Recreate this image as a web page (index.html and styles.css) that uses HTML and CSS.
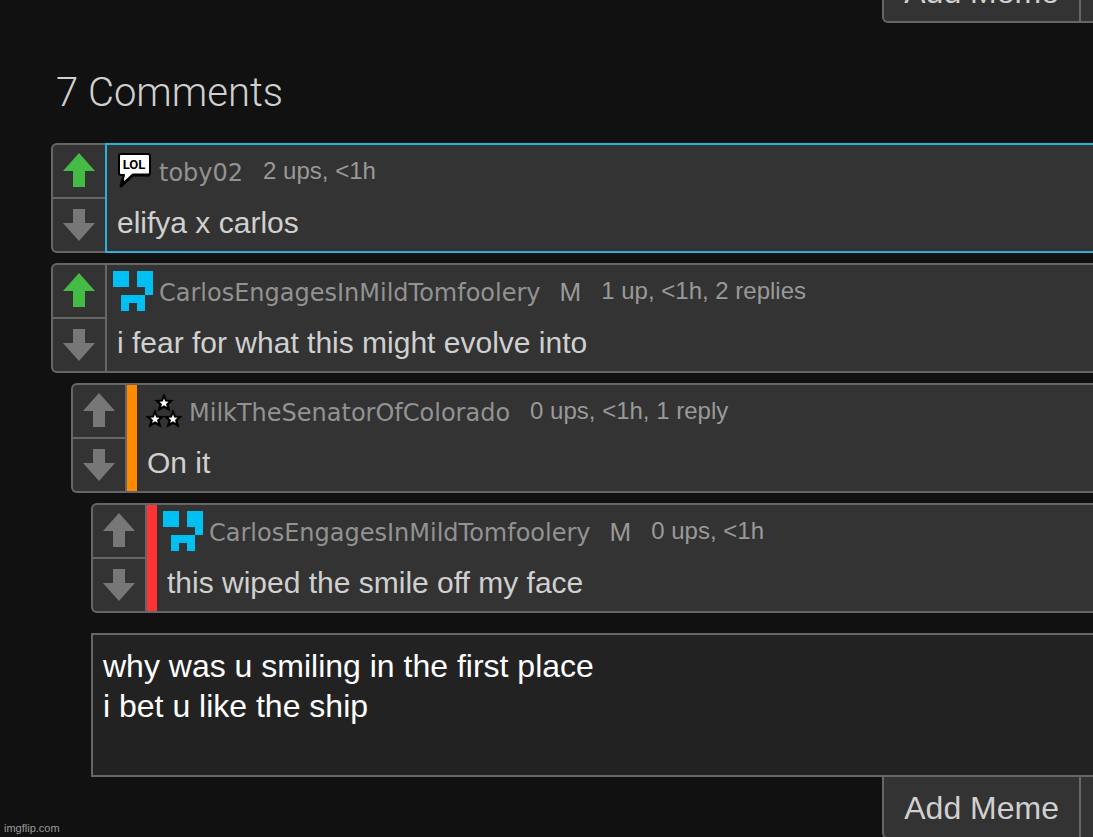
FILE: index.html
```html
<!DOCTYPE html>
<html lang="en">
<head>
<meta charset="utf-8">
<title>Comments</title>
<link rel="stylesheet" href="styles.css">
</head>
<body>
<svg class="defs" aria-hidden="true">
  <symbol id="up" viewBox="0 0 32 36"><path d="M16 0 32 18H22V34H10V18H0Z"/></symbol>
  <symbol id="down" viewBox="0 0 32 36"><path d="M10 2H22V16H32L16 34 0 16H10Z"/></symbol>
  <symbol id="creeper" viewBox="0 0 40 40"><path fill="#00bff3" d="M0 0H16V16H0ZM24 0H40V24H32V16H24ZM8 24H32V40H24V32H16V40H8Z"/></symbol>
  <symbol id="star" viewBox="-10 -10 20 20">
    <path fill="#000" d="M0-10 2.8-3.200 9.800-3 4.600 1.600 6.500 8.800 0 5-6.500 8.800-4.600 1.600-9.800-3-2.800-3.200Z"/>
    <path fill="#fff" d="M0-4.500 1.300-1.400 4.500-1.200 2 .9 2.800 4 0 2.200-2.800 4-2 .9-4.500-1.200-1.300-1.400Z"/>
  </symbol>
</svg>
<main class="page">
  <div class="toolbar toolbar-top">
    <button class="tool" type="button">Add Meme</button>
    <button class="tool tool-more" type="button" aria-label="More"></button>
  </div>
  <h1 class="title">7 Comments</h1>

  <section class="thread">
    <article class="comment selected">
      <div class="votes">
        <button class="vote voted" type="button" aria-label="Upvote"><svg class="arrow"><use href="#up"/></svg></button>
        <button class="vote" type="button" aria-label="Downvote"><svg class="arrow"><use href="#down"/></svg></button>
      </div>
      <div class="body">
        <header class="info">
          <svg class="icon" viewBox="0 0 40 40" aria-hidden="true">
            <path d="M8 3H35Q37 3 37 5V22Q37 24 35 24H20L8 35 11 24H8Q6 24 6 22V5Q6 3 8 3Z" fill="#fff" stroke="#000" stroke-width="2" stroke-linejoin="round"/>
            <path d="M37 24H20L8 35 10 28" fill="none" stroke="#000" stroke-width="3" stroke-linejoin="round"/>
            <text class="icon-text" x="21" y="18" text-anchor="middle">LOL</text>
          </svg>
          <a class="user" href="#">toby02</a>
          <span class="meta">2 ups, &lt;1h</span>
        </header>
        <p class="text">elifya x carlos</p>
      </div>
    </article>

    <article class="comment">
      <div class="votes">
        <button class="vote voted" type="button" aria-label="Upvote"><svg class="arrow"><use href="#up"/></svg></button>
        <button class="vote" type="button" aria-label="Downvote"><svg class="arrow"><use href="#down"/></svg></button>
      </div>
      <div class="body">
        <header class="info">
          <svg class="icon" aria-hidden="true"><use href="#creeper"/></svg>
          <a class="user" href="#">CarlosEngagesInMildTomfoolery</a>
          <span class="mod">M</span>
          <span class="meta">1 up, &lt;1h, 2 replies</span>
        </header>
        <p class="text">i fear for what this might evolve into</p>
      </div>
    </article>

    <article class="comment reply-1">
      <div class="votes">
        <button class="vote" type="button" aria-label="Upvote"><svg class="arrow"><use href="#up"/></svg></button>
        <button class="vote" type="button" aria-label="Downvote"><svg class="arrow"><use href="#down"/></svg></button>
      </div>
      <div class="body">
        <header class="info">
          <svg class="icon" viewBox="0 0 40 40" aria-hidden="true">
            <use href="#star" x="11" y="2" width="20" height="20"/>
            <use href="#star" x="2" y="18" width="20" height="20"/>
            <use href="#star" x="20" y="18" width="20" height="20"/>
          </svg>
          <a class="user" href="#">MilkTheSenatorOfColorado</a>
          <span class="meta">0 ups, &lt;1h, 1 reply</span>
        </header>
        <p class="text">On it</p>
      </div>
    </article>

    <article class="comment reply-2">
      <div class="votes">
        <button class="vote" type="button" aria-label="Upvote"><svg class="arrow"><use href="#up"/></svg></button>
        <button class="vote" type="button" aria-label="Downvote"><svg class="arrow"><use href="#down"/></svg></button>
      </div>
      <div class="body">
        <header class="info">
          <svg class="icon" aria-hidden="true"><use href="#creeper"/></svg>
          <a class="user" href="#">CarlosEngagesInMildTomfoolery</a>
          <span class="mod">M</span>
          <span class="meta">0 ups, &lt;1h</span>
        </header>
        <p class="text">this wiped the smile off my face</p>
      </div>
    </article>
  </section>

  <form class="reply-form">
    <textarea class="reply-box" rows="3" aria-label="Reply">why was u smiling in the first place
i bet u like the ship</textarea>
    <div class="toolbar">
      <button class="tool" type="button">Add Meme</button>
      <button class="tool tool-more" type="button" aria-label="More"></button>
    </div>
  </form>
</main>
<div class="watermark">imgflip.com</div>
</body>
</html>
```
FILE: styles.css
```css
* { box-sizing: border-box; }

html { height: 100%; overflow: hidden; background: #111; }

body {
  margin: 0;
  height: 100%;
  overflow: hidden;
  font-family: "Liberation Sans", Arial, sans-serif;
  color: #d0d0d0;
}

button { font: inherit; color: inherit; margin: 0; padding: 0; border: 0; background: none; }

.defs { display: none; }

.page { padding-left: 51px; }

.toolbar { display: flex; justify-content: flex-end; }

.toolbar-top { height: 23px; align-items: flex-end; overflow: hidden; }

.tool {
  flex: none;
  height: 62px;
  padding: 2px 20px 0;
  font-size: 32px;
  line-height: 58px;
  background: #333;
  border: 2px solid #666;
  border-top: 0;
  border-radius: 0 0 0 6px;
}

.tool-more { width: 12px; padding: 0; border-width: 0 0 2px; border-radius: 0; }

.title {
  margin: 45px 0 25px 5px;
  font-family: Roboto, "Liberation Sans", sans-serif;
  font-size: 40px;
  font-weight: 300;
  line-height: 50px;
}

.thread { display: flex; flex-direction: column; gap: 10px; }

.comment {
  display: flex;
  background: #333;
  border: 2px solid #666;
  border-right: 0;
  border-radius: 6px 0 0 6px;
}

.reply-1 { margin-left: 20px; }
.reply-2 { margin-left: 40px; }

.votes { flex: none; display: flex; flex-direction: column; width: 52px; }

.vote { display: flex; flex: 1; align-items: center; justify-content: center; fill: #777; }
.vote + .vote { border-top: 2px solid #666; }
.voted { fill: #44bb44; }
.arrow { width: 32px; height: 36px; }

.body {
  flex: 1;
  min-width: 0;
  padding: 6px 6px 8px;
  border-left: 2px solid #666;
}

.selected .body {
  margin: -2px 0;
  border: 2px solid #2ab0dc;
  border-right: 0;
}

.reply-1 .body, .reply-2 .body { padding-left: 16px; }
.reply-1 .body { background: linear-gradient(#ff8a00, #ff8a00) left / 10px 100% no-repeat; }
.reply-2 .body { background: linear-gradient(#ff3333, #ff3333) left / 10px 100% no-repeat; }

.info { display: flex; align-items: center; height: 40px; font-size: 24px; white-space: nowrap; color: #999; }
.icon { flex: none; width: 40px; height: 40px; margin-right: 6px; }
.icon-text { font: 700 13px Roboto, sans-serif; fill: #000; }
.user { margin-top: 4px; font-family: Verdana, "DejaVu Sans", sans-serif; color: #929292; text-decoration: none; }
.mod { margin: 2px 0 0 19px; font-size: 26px; }
.meta { margin-left: 20px; }

.text { margin: 12px 4px 0; font-size: 30px; line-height: 40px; }

.reply-form { margin: 20px 0 0 40px; }

.reply-box {
  display: block;
  width: 100%;
  margin: 0;
  padding: 11px 10px 9px;
  border: 2px solid #666;
  border-right: 0;
  border-radius: 0;
  outline: 0;
  resize: none;
  overflow: hidden;
  background: #222;
  color: #fff;
  font: 32px/40px "Liberation Sans", Arial, sans-serif;
}

.watermark { position: absolute; left: 4px; bottom: 2px; font-size: 11px; line-height: 13px; color: #999; }
```
